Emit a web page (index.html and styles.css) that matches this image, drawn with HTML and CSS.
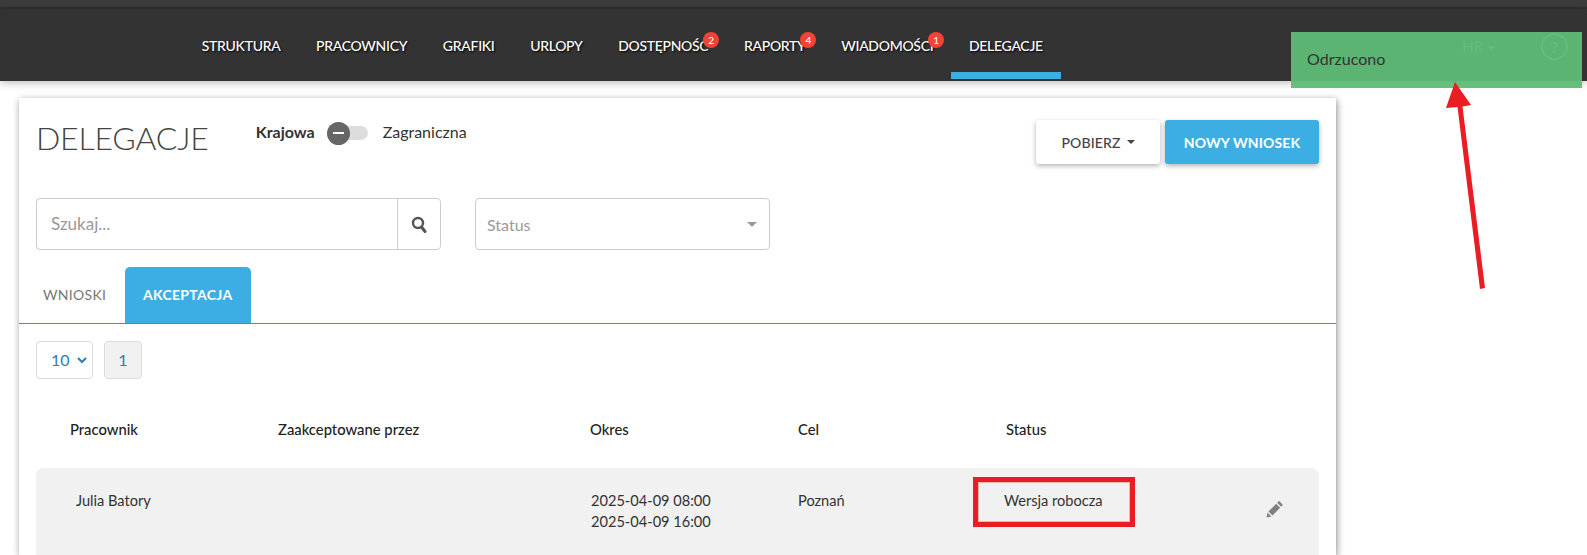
FILE: index.html
```html
<!DOCTYPE html>
<html lang="pl">
<head>
    <meta charset="UTF-8">
    <title>Delegacje</title>
    <link rel="stylesheet" href="styles.css">
</head>
<body>

<!-- gorny pasek -->
<div class="top-strip"></div>
<header class="nav">
    <nav class="nav-menu">
        <a href="#" class="nav-item">Struktura</a>
        <a href="#" class="nav-item">Pracownicy</a>
        <a href="#" class="nav-item">Grafiki</a>
        <a href="#" class="nav-item">Urlopy</a>
        <a href="#" class="nav-item">Dostępność<span class="badge">2</span></a>
        <a href="#" class="nav-item">Raporty<span class="badge">4</span></a>
        <a href="#" class="nav-item">Wiadomości<span class="badge">1</span></a>
        <a href="#" class="nav-item active">Delegacje</a>
    </nav>
    <div class="nav-user">
        <span class="nav-hr">HR <i class="caret"></i></span>
        <span class="nav-help">?</span>
    </div>
</header>

<main class="card">
    <div class="card-head">
        <h1 class="title">DELEGACJE</h1>
        <div class="switch-box">
            <b class="switch-label">Krajowa</b>
            <span class="switch"><span class="switch-knob"></span></span>
            <span class="switch-label">Zagraniczna</span>
        </div>
        <div class="actions">
            <a href="#" class="btn">POBIERZ <i class="caret"></i></a>
            <a href="#" class="btn btn-blue">NOWY WNIOSEK</a>
        </div>
    </div>

    <div class="filters">
        <div class="search">
            <span class="search-text">Szukaj...</span>
            <span class="search-btn">
                <svg width="16" height="17" viewBox="0 0 16 17"><circle cx="7" cy="7" r="5" fill="none" stroke="#555" stroke-width="2.400"/><path d="M10.500 11l3.500 4.500" stroke="#555" stroke-width="3" stroke-linecap="round"/></svg>
            </span>
        </div>
        <div class="status-select">
            <span>Status</span>
            <i class="caret"></i>
        </div>
    </div>

    <div class="tabs">
        <a href="#" class="tab">WNIOSKI</a>
        <a href="#" class="tab tab-active">AKCEPTACJA</a>
    </div>

    <div class="pager">
        <span class="page-size">10
            <svg width="10" height="7" viewBox="0 0 10 7"><path d="M1 1l4 4 4-4" fill="none" stroke="#337ab7" stroke-width="2"/></svg>
        </span>
        <span class="page-num">1</span>
    </div>

    <div class="table-head">
        <span>Pracownik</span>
        <span>Zaakceptowane przez</span>
        <span>Okres</span>
        <span>Cel</span>
        <span>Status</span>
    </div>

    <div class="table-row">
        <span class="cell-name">Julia Batory</span>
        <span></span>
        <span class="cell-date">2025-04-09 08:00<br>2025-04-09 16:00</span>
        <span>Poznań</span>
        <span class="cell-status">Wersja robocza</span>
        <span class="cell-edit">
            <svg width="17" height="17" viewBox="0 0 17 17"><path d="M0.500 16.500l1-5 3.900 4-4.900 1zM2.500 10.400l7.700-7.700 4 4-7.700 7.700zM11.200 1.700l1.100-1.100c.4-.4 1-.4 1.400 0l2.600 2.600c.4.4.4 1 0 1.400l-1.100 1.100z" fill="#808080"/></svg>
        </span>
    </div>
</main>

<!-- powiadomienie -->
<div class="toast">Odrzucono</div>

<!-- adnotacje na zrzucie -->
<div class="mark-box"></div>
<svg class="mark-arrow" width="60" height="215" viewBox="0 0 60 215">
    <path d="M13 0L4 26l11.500-1 22.500 182 5-1L20.500 24.500 29 23z" fill="#ea1c24"/>
</svg>

</body>
</html>
```

FILE: styles.css
```css
* {
    box-sizing: border-box;
}

html,
body {
    margin: 0;
    height: 555px;
    overflow: hidden;
}

body {
    position: relative;
    background-color: #fff;
    font-family: Lato, "Liberation Sans", sans-serif;
    font-size: 14px;
    color: #333;
}

a {
    text-decoration: none;
    color: inherit;
}

.caret {
    display: inline-block;
    border-width: 4px 4px 0;
    border-style: solid;
    border-color: #444 transparent transparent;
    vertical-align: middle;
}

.top-strip {
    height: 9px;
    background-color: #3c3c3c;
    border-bottom: 2px solid #2f2f2f;
}

.nav {
    height: 72px;
    background-color: #333;
    display: flex;
    justify-content: space-between;
    box-shadow: 0 2px 8px rgba(0, 0, 0, 0.25);
    position: relative;
}

.nav-menu {
    display: flex;
    padding-left: 184px;
}

.nav-item {
    position: relative;
    height: 70px;
    padding: 27px 17.8px 0;
    color: #fff;
    font-size: 14px;
    font-weight: 500;
    letter-spacing: -0.3px;
    line-height: 20px;
    text-transform: uppercase;
    text-shadow: 1px 1px 2px #000;
}

.nav-item.active {
    border-bottom: 7px solid #3daee3;
}

.badge {
    position: absolute;
    top: 23px;
    right: 7px;
    width: 16px;
    height: 16px;
    border-radius: 50%;
    background-color: #f44336;
    color: #fff;
    font-size: 10px;
    letter-spacing: 0;
    line-height: 16px;
    text-align: center;
    text-shadow: none;
}

.nav-user {
    display: flex;
    align-items: flex-start;
    padding: 24px 19px 0 0;
    color: #bbb;
}

.nav-hr {
    font-size: 15px;
    font-weight: 400;
    line-height: 26px;
    margin-right: 46px;
}

.nav-hr .caret {
    border-top-color: #bbb;
}

.nav-help {
    width: 27px;
    height: 27px;
    border: 2px solid #bbb;
    border-radius: 50%;
    font-size: 16px;
    font-weight: 700;
    line-height: 23px;
    text-align: center;
}

.card {
    width: 1317px;
    height: 457px;
    margin: 17px 0 0 19px;
    background-color: #fff;
    box-shadow: 1px 2px 7px rgba(0, 0, 0, 0.45);
}

.card-head {
    display: flex;
    height: 100px;
    padding: 0 17px;
    position: relative;
}

.title {
    margin: 22px 0 0;
    font-size: 32px;
    font-weight: 300;
    letter-spacing: -0.2px;
    line-height: 36px;
    color: #444;
}

.switch-box {
    display: flex;
    align-items: flex-start;
    margin: 24px 0 0 47px;
    line-height: 20px;
    font-size: 16px;
}

.switch-label {
    color: #333;
}

b.switch-label {
    font-weight: 700;
}

.switch {
    position: relative;
    width: 41px;
    height: 14px;
    margin: 4px 15px 0 12px;
    border-radius: 7px;
    background-color: #ddd;
}

.switch-knob {
    position: absolute;
    top: -4px;
    left: 0;
    width: 23px;
    height: 23px;
    border-radius: 50%;
    background-color: #666;
}

.switch-knob::after {
    content: "";
    position: absolute;
    top: 10px;
    left: 6px;
    width: 11px;
    height: 2px;
    background-color: #fff;
}

.actions {
    display: flex;
    gap: 5px;
    margin: 22px 0 0 auto;
}

.btn {
    display: flex;
    align-items: center;
    justify-content: center;
    gap: 6px;
    width: 124px;
    height: 44px;
    border-radius: 3px;
    background-color: #fff;
    color: #444;
    font-size: 14px;
    font-weight: 500;
    letter-spacing: 0.15px;
    box-shadow: 0 2px 5px rgba(0, 0, 0, 0.3);
}

.btn-blue {
    width: 154px;
    background-color: #3daee3;
    color: #fff;
    font-weight: 700;
}

.filters {
    display: flex;
    gap: 34px;
    padding: 0 17px;
}

.search {
    display: flex;
    width: 405px;
    height: 52px;
    border: 1px solid #ccc;
    border-radius: 4px;
}

.search-text {
    flex: 1;
    padding-left: 14px;
    color: #999;
    font-size: 17px;
    line-height: 50px;
}

.search-btn {
    display: flex;
    align-items: center;
    justify-content: center;
    width: 43px;
    border-left: 1px solid #ccc;
}

.status-select {
    display: flex;
    align-items: center;
    justify-content: space-between;
    width: 295px;
    height: 52px;
    padding: 0 12px 0 11px;
    border: 1px solid #ccc;
    border-radius: 4px;
    color: #999;
    font-size: 16px;
}

.status-select .caret {
    border-width: 5px 5px 0;
    border-top-color: #999;
}

.tabs {
    display: flex;
    height: 56px;
    margin-top: 17px;
    border-bottom: 1px solid #3b8fbd;
    box-sizing: content-box;
}

.tab {
    padding: 0 18px;
    color: #777;
    font-size: 14px;
    letter-spacing: 0.3px;
    line-height: 56px;
}

.tab:first-child {
    width: 106px;
    padding: 0 0 0 24px;
}

.tab-active {
    width: 126px;
    border-radius: 5px 5px 0 0;
    background-color: #3daee3;
    color: #fff;
    font-weight: 700;
}

.pager {
    display: flex;
    gap: 11px;
    padding: 17px 17px 0;
}

.page-size,
.page-num {
    height: 38px;
    border: 1px solid #ddd;
    border-radius: 4px;
    color: #337ab7;
    font-size: 16px;
    line-height: 36px;
    text-align: center;
}

.page-size {
    width: 57px;
    padding-left: 14px;
    text-align: left;
}

.page-size svg {
    margin-left: 3px;
    vertical-align: 2px;
}

.page-num {
    width: 38px;
    background-color: #f1f1f1;
}

.table-head,
.table-row {
    display: grid;
    grid-template-columns: 208px 312px 208px 208px 1fr;
    margin: 0 17px;
    padding-left: 34px;
}

.table-head {
    margin-top: 40px;
    font-weight: 500;
    font-size: 14.8px;
    line-height: 20px;
    color: #222;
}

.table-row {
    grid-template-columns: 208px 312px 208px 208px 260px 1fr;
    height: 87px;
    margin-top: 29px;
    padding-top: 22px;
    border-radius: 8px 8px 0 0;
    background-color: #f1f1f1;
    font-size: 14.6px;
    line-height: 21px;
}

.cell-name {
    padding-left: 6px;
}

.cell-date {
    padding-left: 1px;
}

.cell-status {
    margin-left: -2px;
}

.cell-edit {
    padding-top: 11px;
}

/* powiadomienie */
.toast {
    position: absolute;
    top: 32px;
    left: 1291px;
    width: 291px;
    height: 56px;
    padding-left: 16px;
    background-color: rgba(94, 188, 118, 0.95);
    color: #333;
    font-size: 16px;
    line-height: 54px;
}

/* adnotacje */
.mark-box {
    position: absolute;
    top: 477px;
    left: 973px;
    width: 162px;
    height: 50px;
    border: 5px solid #ed1c24;
    box-shadow: inset 0 0 0 1px #e6b8b8;
}

.mark-arrow {
    position: absolute;
    top: 82px;
    left: 1442px;
}
```
